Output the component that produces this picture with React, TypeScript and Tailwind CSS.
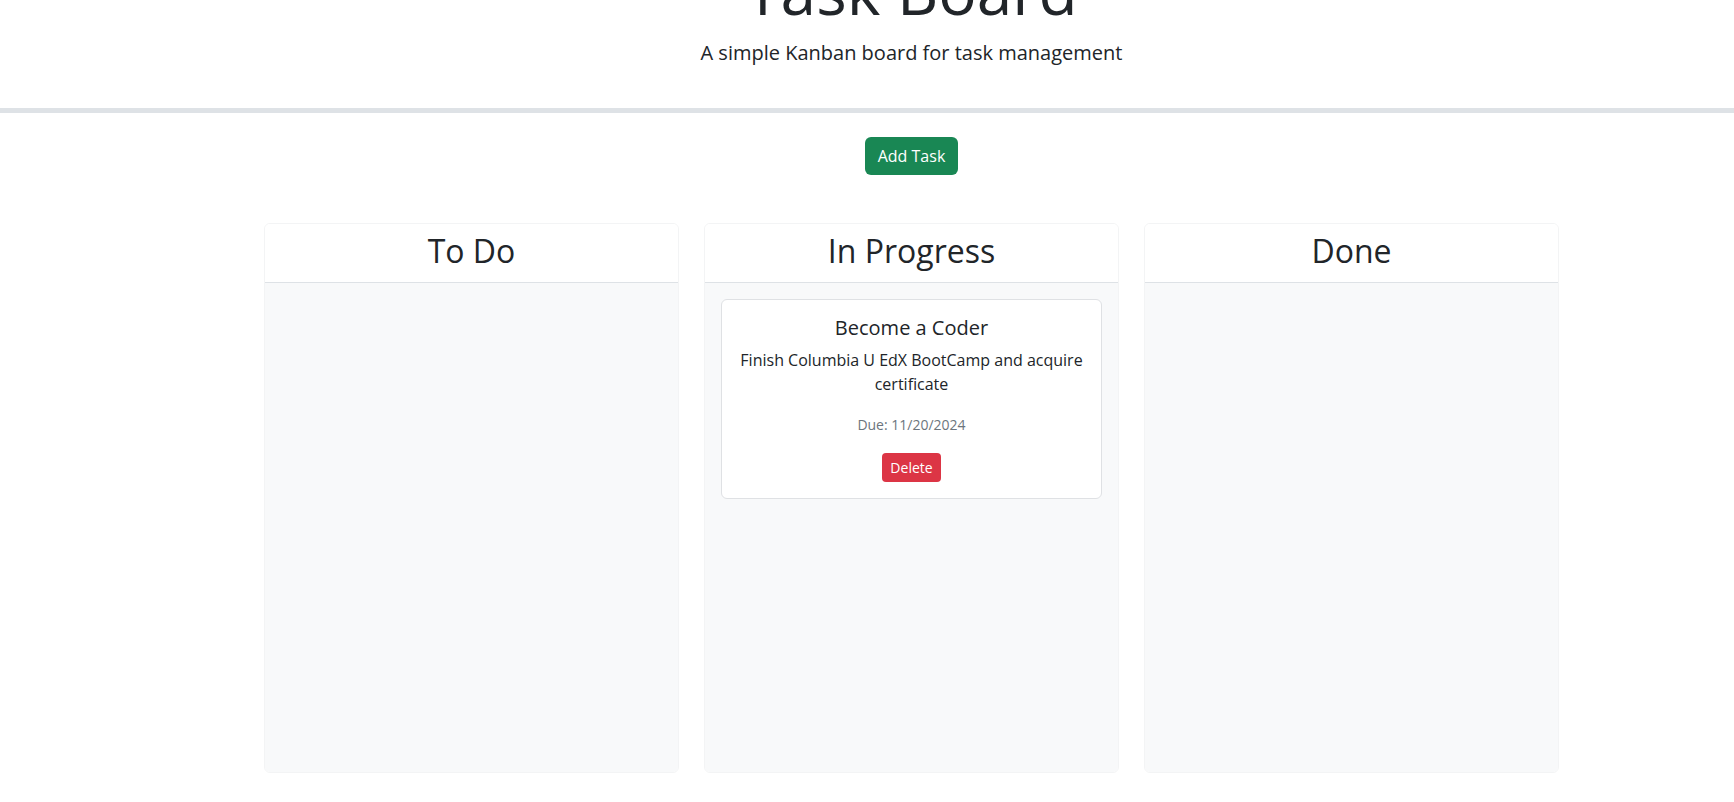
import React from 'react';

interface Task {
  id: number;
  title: string;
  description: string;
  due: string;
}

const columns: { name: string; tasks: Task[] }[] = [
  { name: 'To Do', tasks: [] },
  {
    name: 'In Progress',
    tasks: [
      {
        id: 1,
        title: 'Become a Coder',
        description: 'Finish Columbia U EdX BootCamp and acquire certificate',
        due: '11/20/2024',
      },
    ],
  },
  { name: 'Done', tasks: [] },
];

const TaskCard: React.FC<{ task: Task }> = ({ task }) => (
  <div className="bg-white border border-[#dfe1e4] rounded-[6px] p-4 text-center">
    <h5 className="text-[20px] leading-[24px] mb-2">{task.title}</h5>
    <p className="text-[16px] leading-[24px] mb-4">{task.description}</p>
    <p className="text-[16px] leading-[24px] mb-4">
      <small className="text-[14px] text-[#6c757d]">Due: {task.due}</small>
    </p>
    <button className="bg-[#dc3545] text-white text-[14px] leading-[21px] px-2 py-1 rounded-[4px]">
      Delete
    </button>
  </div>
);

export default function App() {
  return (
    <div
      className="min-h-screen bg-white text-[#212529] overflow-hidden"
      style={{ fontFamily: '"Open Sans", "Liberation Sans", sans-serif' }}
    >
      {/* Header */}
      <header className="pl-[89px] text-center -mt-[48px]">
        <h1 className="text-[64px] leading-[77px] font-normal mb-[9px]">Task Board</h1>
        <p className="text-[20px] leading-[30px] font-normal">A simple Kanban board for task management</p>
      </header>
      <div className="h-[5px] bg-[#dee2e6] mt-[40px]" />

      {/* Add task */}
      <div className="pl-[89px] flex justify-center mt-[24px]">
        <button className="bg-[#198754] text-white text-[16px] leading-[24px] px-[13px] py-[7px] rounded-[6px]">
          Add Task
        </button>
      </div>

      {/* Board */}
      <div className="pl-[89px] mt-[48px]">
        <div className="w-[1295px] mx-auto grid grid-cols-3 gap-[25px]">
          {columns.map((col) => (
            <div
              key={col.name}
              className="h-[550px] flex flex-col border border-[#f3f4f5] rounded-[6px] overflow-hidden"
            >
              <div className="bg-white border-b border-[#dee2e6] pt-[8px] pb-[12px] text-center">
                <h2 className="text-[32px] leading-[38px]">{col.name}</h2>
              </div>
              <div className="flex-1 bg-[#f8f9fa] p-4 flex flex-col gap-4">
                {col.tasks.map((t) => (
                  <TaskCard key={t.id} task={t} />
                ))}
              </div>
            </div>
          ))}
        </div>
      </div>
    </div>
  );
}
